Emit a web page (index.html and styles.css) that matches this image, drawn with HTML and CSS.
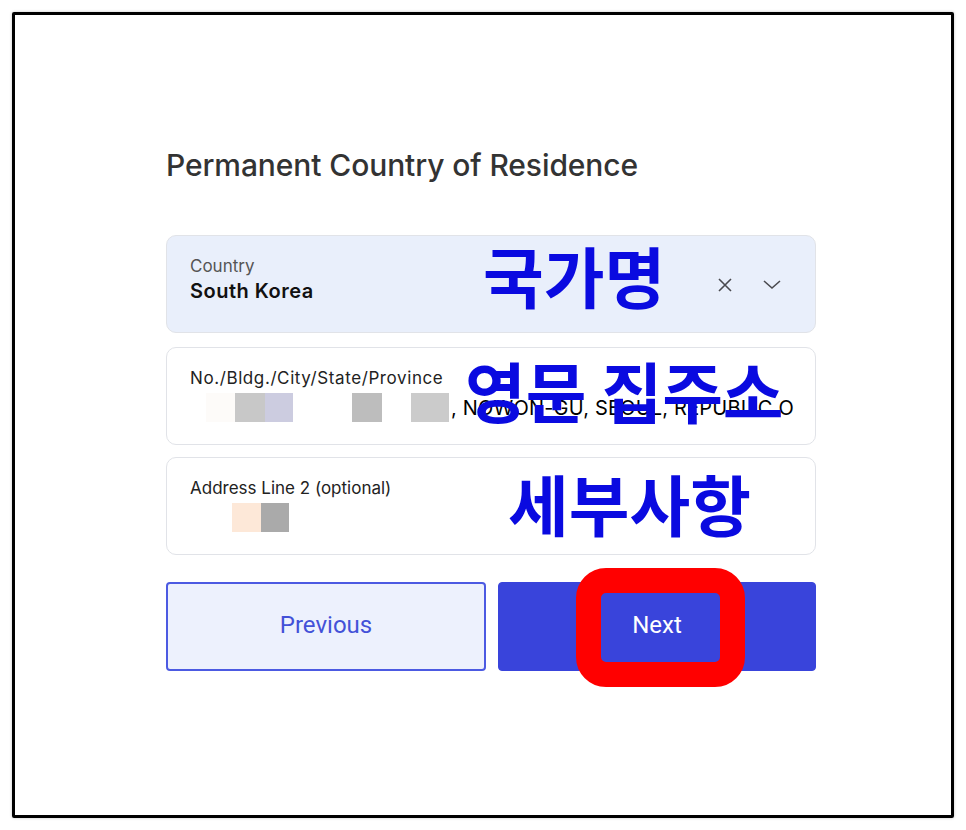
FILE: index.html
```html
<!DOCTYPE html>
<html lang="en">
<head>
<meta charset="utf-8">
<title>Permanent Country of Residence</title>
<link rel="stylesheet" href="styles.css">
</head>
<body>
<div class="frame">
  <div class="form">
    <h1 class="title">Permanent Country of Residence</h1>

    <div class="field field-select">
      <div class="field-text">
        <div class="label">Country</div>
        <div class="value bold">South Korea</div>
      </div>
      <div class="field-icons">
        <svg class="icon" width="18" height="18" viewBox="0 0 18 18"><path d="M3 3 L15 15 M15 3 L3 15" stroke="#4a4a4f" stroke-width="1.6" fill="none"/></svg>
        <svg class="icon" width="20" height="18" viewBox="0 0 20 18"><path d="M2 5 L10 12 L18 5" stroke="#4a4a4f" stroke-width="1.6" fill="none"/></svg>
      </div>
      <div class="note note-1">국가명</div>
    </div>

    <div class="field">
      <div class="field-text">
        <div class="label label-wide">No./Bldg./City/State/Province</div>
        <div class="value row">
          <span class="blk" style="width:29px;background:#fdfbf9"></span><span class="blk" style="width:30px;background:#c8c8c8"></span><span class="blk" style="width:28px;background:#cccce0"></span><span class="blk" style="width:59px;background:#fff"></span><span class="blk" style="width:30px;background:#bdbdbd"></span><span class="blk" style="width:29px;background:#fff"></span><span class="blk" style="width:38px;background:#cbcbcb"></span><span class="addr">, NOWON-GU, SEOUL, REPUBLIC O</span>
        </div>
      </div>
      <div class="note note-2">영문 집주소</div>
    </div>

    <div class="field field-last">
      <div class="field-text">
        <div class="label">Address Line 2 (optional)</div>
        <div class="value row">
          <span class="blk" style="width:26px;background:#fff"></span><span class="blk" style="width:29px;background:#fde8d8"></span><span class="blk" style="width:28px;background:#aaaaaa"></span>
        </div>
      </div>
      <div class="note note-3">세부사항</div>
    </div>

    <div class="actions">
      <button class="btn btn-prev">Previous</button>
      <button class="btn btn-next">Next<span class="highlight"></span></button>
    </div>
  </div>
</div>
</body>
</html>
```

FILE: styles.css
```css
* { box-sizing: border-box; }
html, body { margin: 0; padding: 0; background: #fff; }
body {
  width: 966px;
  height: 830px;
  font-family: Inter, "Noto Sans", sans-serif;
  padding: 12px;
}
.frame {
  width: 942px;
  height: 806px;
  border: 3px solid #000;
  border-radius: 2px;
  box-shadow: 0 0 3px rgba(0,0,0,0.25);
  padding: 133px 0 0 151px;
}
.form { width: 650px; }
.title {
  margin: 0 0 53px;
  font-size: 30px;
  font-weight: 500;
  color: #333;
  line-height: 34px;
  letter-spacing: -0.1px;
}
.field {
  position: relative;
  height: 98px;
  border: 1px solid #e1e3e8;
  border-radius: 10px;
  background: #fff;
  margin-bottom: 14px;
  display: flex;
  align-items: flex-start;
  padding: 20px 23px 0;
}
.field + .field-last { margin-top: -2px; }
.field-select { background: #e9effb; }
.field-text { flex: 1; }
.label {
  font-family: Inter, sans-serif;
  font-size: 17px;
  color: #222;
  line-height: 20px;
  letter-spacing: 0;
}
.label-wide { letter-spacing: 0.6px; }
.field-select .label { color: #555; }
.value {
  margin-top: 2px;
  font-size: 20px;
  color: #111;
  line-height: 26px;
}
.bold { font-weight: 600; letter-spacing: 0.5px; }
.row { display: flex; align-items: center; height: 29px; padding-left: 16px; margin-top: 5px; }
.blk { display: inline-block; height: 29px; }
.addr { font-family: Inter, sans-serif; font-size: 20px; letter-spacing: 0.2px; color: #000; margin-left: 2px; white-space: nowrap; }
.field-icons {
  display: flex;
  gap: 28px;
  align-items: center;
  margin-top: 20px;
  margin-right: 10px;
}
.note {
  position: absolute;
  font-family: "Noto Sans CJK KR", sans-serif;
  font-weight: 700;
  color: #0a0ae0;
  line-height: 1;
  white-space: nowrap;
}
.note-1 { left: 316px; top: 5px; font-size: 66px; }
.note-2 { left: 298px; top: 8px; font-size: 66px; }
.note-3 { left: 341px; top: 11px; font-size: 66px; }
.actions {
  display: flex;
  gap: 12px;
  margin-top: 27px;
}
.btn {
  position: relative;
  flex: 1;
  height: 89px;
  border-radius: 4px;
  font-family: Roboto, sans-serif;
  font-size: 24px;
  padding-bottom: 5px;
  cursor: pointer;
}
.btn-prev {
  background: #edf1fd;
  border: 2px solid #4c5ae2;
  color: #4351d8;
}
.btn-next {
  background: #3944db;
  border: 1px solid #3944db;
  color: #fff;
}
.highlight {
  position: absolute;
  left: 77px;
  top: -15px;
  width: 169px;
  height: 119px;
  border: 25px solid #ff0000;
  border-radius: 30px;
}
```
